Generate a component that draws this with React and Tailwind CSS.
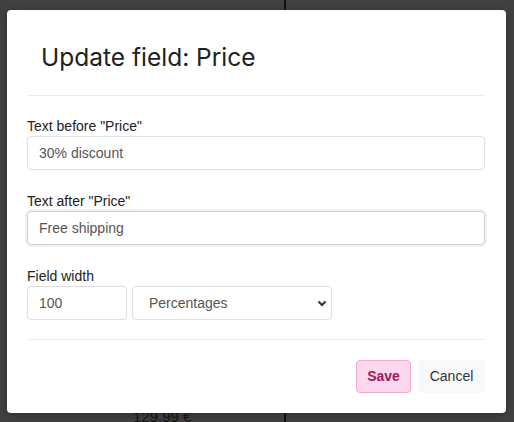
import { useState } from "react";

const body = { fontFamily: '"Liberation Sans", Arial, sans-serif' };

const Field = ({ label, value, focused, onChange }) => (
    <div className="flex flex-col">
        <label className="text-[14px] leading-5 text-[#222]">{label}</label>
        <input
            value={value}
            onChange={(e) => onChange(e.target.value)}
            className={`h-[34px] w-full rounded-[4px] border px-[11px] text-[14px] text-[#555] outline-none ${
                focused
                    ? "border-[#cfcfcf] shadow-[0_0_0_2px_rgba(0,0,0,0.06)]"
                    : "border-[#dedede]"
            }`}
            style={body}
        />
    </div>
);

export default function App() {
    const [before, setBefore] = useState("30% discount");
    const [after, setAfter] = useState("Free shipping");
    const [width, setWidth] = useState("100");
    const [unit, setUnit] = useState("percent");

    return (
        <div className="relative h-[422px] w-[514px] overflow-hidden bg-[#414141]" style={body}>
            {/* page behind the overlay */}
            <div className="absolute left-[284px] top-0 h-full w-[2px] bg-[#111]" />
            <div className="absolute left-[133px] top-[407px] text-[15px] leading-5 text-[#151515]">129.99 €</div>

            {/* modal */}
            <div className="absolute left-[7px] top-[10px] w-[499px] rounded-[4px] bg-white shadow-[0_2px_8px_rgba(0,0,0,0.3)]">
                <div className="px-[34px] pt-[31px] pb-[22px]">
                    <h2
                        className="text-[24.5px] leading-8 text-[#222]"
                        style={{ fontFamily: "Inter, sans-serif" }}
                    >
                        Update field: Price
                    </h2>
                </div>
                <div className="mx-[21px] h-px bg-[#ececec]" />

                <div className="flex flex-col gap-[21px] pl-[20px] pr-[21px] pt-[20px] pb-[19px]">
                    <Field label={'Text before "Price"'} value={before} onChange={setBefore} />
                    <Field label={'Text after "Price"'} value={after} onChange={setAfter} focused />
                    <div className="flex flex-col">
                        <label className="text-[14px] leading-5 text-[#222]">Field width</label>
                        <div className="flex gap-[5px]">
                            <input
                                value={width}
                                onChange={(e) => setWidth(e.target.value)}
                                className="h-[34px] w-[100px] rounded-[4px] border border-[#dedede] px-[11px] text-[14px] text-[#555] outline-none"
                                style={body}
                            />
                            <div className="relative w-[200px]">
                                <select
                                    value={unit}
                                    onChange={(e) => setUnit(e.target.value)}
                                    className="h-[34px] w-full appearance-none rounded-[4px] border border-[#dedede] bg-white pl-4 pr-8 text-[14px] text-[#555] outline-none"
                                    style={body}
                                >
                                    <option value="percent">Percentages</option>
                                    <option value="px">Pixels</option>
                                </select>
                                <svg
                                    className="pointer-events-none absolute right-[5px] top-[14px]"
                                    width="10"
                                    height="7"
                                    viewBox="0 0 10 7"
                                    fill="none"
                                >
                                    <path d="M1.5 1.5 L5 5 L8.5 1.5" stroke="#333" strokeWidth="2" />
                                </svg>
                            </div>
                        </div>
                    </div>
                </div>

                <div className="mx-[21px] h-px bg-[#ececec]" />

                <div className="flex justify-end gap-[7px] px-[21px] pt-[20px] pb-[20px]">
                    <button className="h-[33px] w-[55px] rounded-[4px] border border-[#f1a9d1] bg-[#fcd8ed] text-[14px] font-bold text-[#a3175f]">
                        Save
                    </button>
                    <button className="h-[33px] w-[67px] rounded-[4px] bg-[#f8f9fa] text-[14px] text-[#333]">
                        Cancel
                    </button>
                </div>
            </div>
        </div>
    );
}
